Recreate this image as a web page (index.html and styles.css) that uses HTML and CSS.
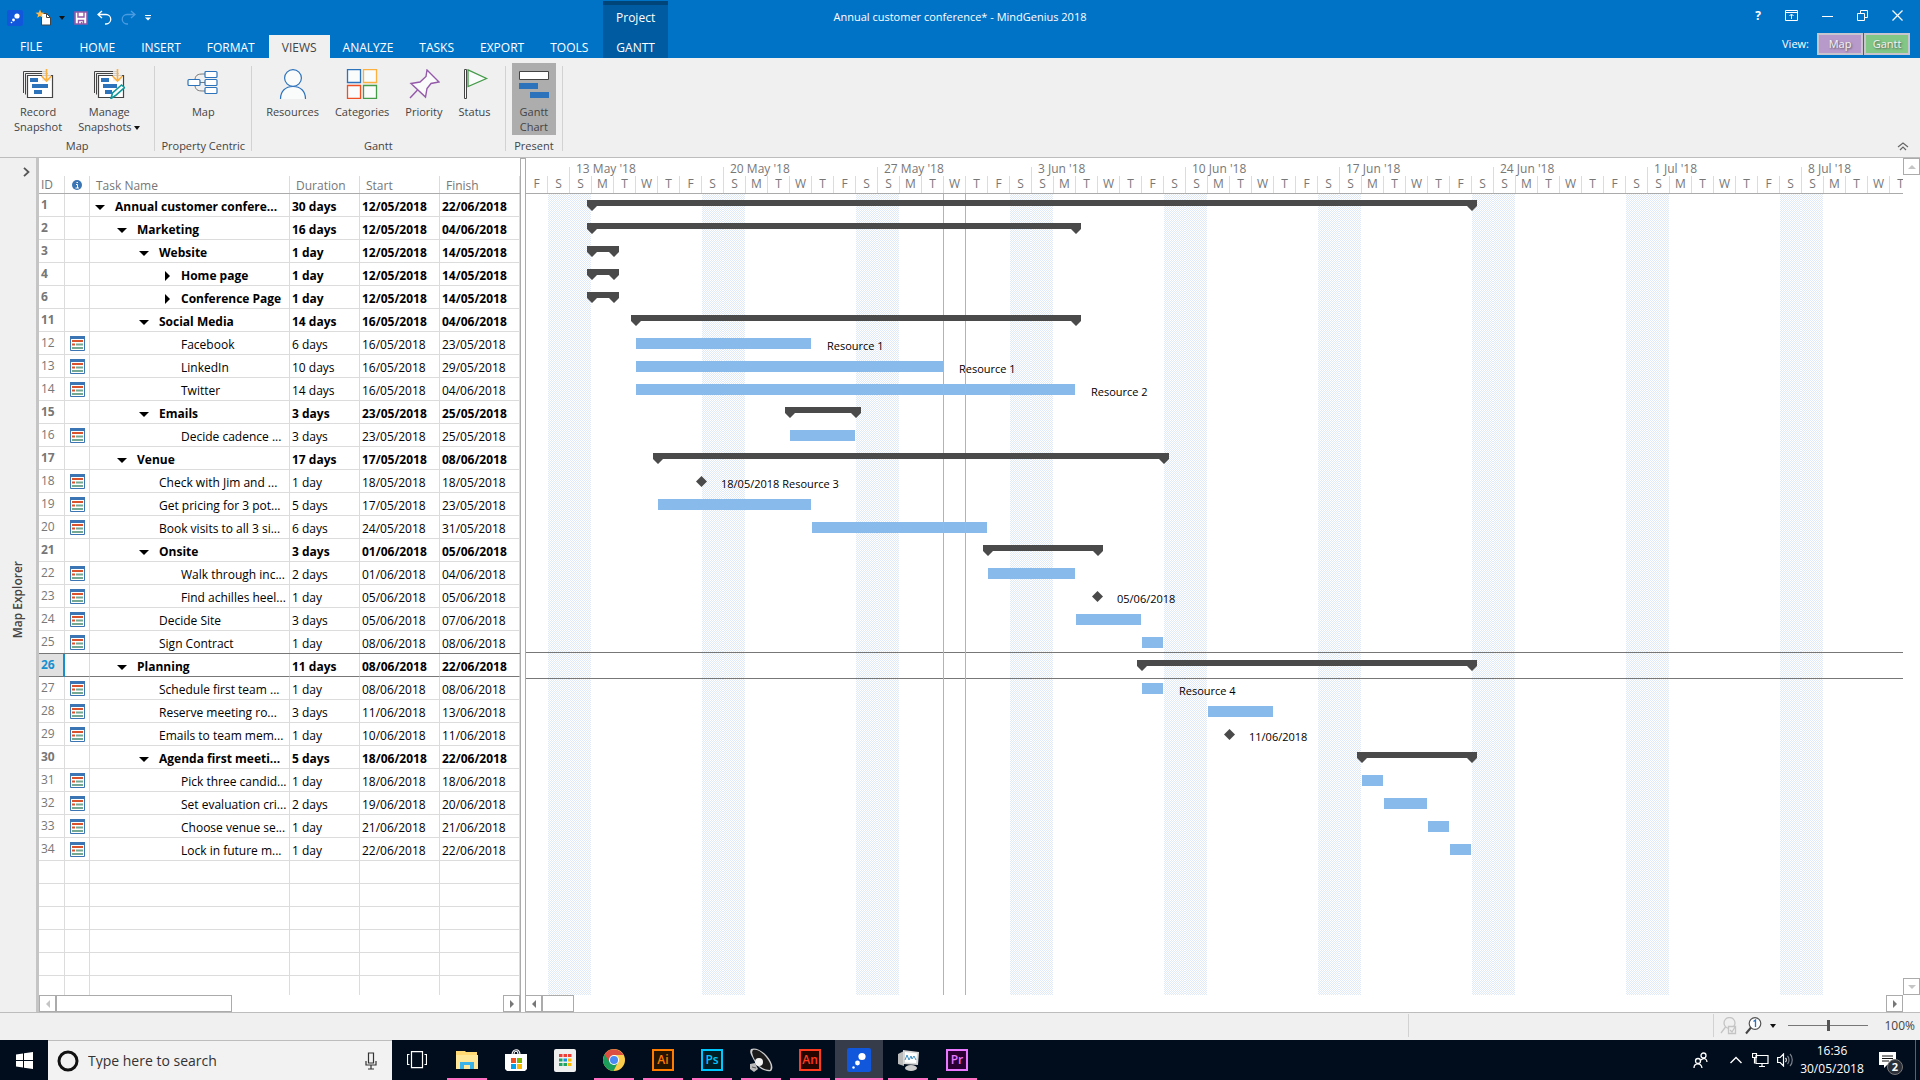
FILE: index.html
```
<!DOCTYPE html>
<html lang="en">
<head>
  <meta charset="UTF-8" />
  <meta name="viewport" content="width=device-width, initial-scale=1.0" />
  <title>Annual customer conference* - MindGenius 2018</title>
  <link rel="stylesheet" href="styles.css">
</head>
<body>
  <header class="titlebar">
    <div class="title-left">
      <div class="title-stack">
        <div class="quick">
          <svg class="app-logo" width="16" height="16" viewBox="0 0 16 16"><rect width="16" height="16" rx="2" fill="#1157dc"/><circle cx="10" cy="6" r="2.6" fill="#fff"/><circle cx="6.5" cy="10" r="1.4" fill="#fff"/><circle cx="4.5" cy="12.5" r=".8" fill="#fff"/></svg>
          <button aria-label="New"><svg width="17" height="17" viewBox="0 0 17 17"><path d="M6.5 4.500h5l4 4v7.500h-9z" fill="#fff" stroke="#444"/><path d="M11.500 4.500v4h4" fill="none" stroke="#444"/><path d="M5 .5l1.200 3 3.300.2-2.600 2 .9 3.100L5 7 2.200 8.800l.9-3.100-2.600-2 3.300-.2z" fill="#fdb94a"/></svg></button>
          <i class="caret"></i>
          <button aria-label="Save"><svg width="14" height="14" viewBox="0 0 14 14"><path d="M1 1h12v12H1z" fill="#fff" stroke="#9459a8" stroke-width="1.600"/><path d="M4 1v5h6V1M4.500 13V9.500h5V13M7.500 11v2" fill="none" stroke="#9459a8" stroke-width="1.400"/></svg></button>
          <button aria-label="Undo"><svg width="15" height="15" viewBox="0 0 15 15"><path d="M5 1L1 4.500 5 8M1 4.500h8a4.500 4.500 0 0 1 0 9.500H8" fill="none" stroke="#fff" stroke-width="1.300"/></svg></button>
          <button aria-label="Redo"><svg width="15" height="15" viewBox="0 0 15 15"><path d="M10 1l4 3.500L10 8M14 4.500H6A4.500 4.500 0 0 0 6 14h1" fill="none" stroke="#4a9be0" stroke-width="1.300"/></svg></button>
          <svg width="6" height="6" viewBox="0 0 6 6"><path d="M0 .5h6" stroke="#fff"/><path d="M0 2.500h6l-3 3z" fill="#fff"/></svg>
        </div>
        <nav class="tabs">
          <button class="tab file">FILE</button>
          <button class="tab">HOME</button>
          <button class="tab">INSERT</button>
          <button class="tab">FORMAT</button>
          <button class="tab active">VIEWS</button>
          <button class="tab">ANALYZE</button>
          <button class="tab">TASKS</button>
          <button class="tab">EXPORT</button>
          <button class="tab">TOOLS</button>
        </nav>
      </div>
      <div class="context-tab">
        <span>Project</span>
        <button class="tab">GANTT</button>
      </div>
    </div>
    <h1>Annual customer conference* - MindGenius 2018</h1>
    <div class="title-right">
      <div class="window-buttons">
        <button class="help" aria-label="Help">?</button>
        <button aria-label="Ribbon display options"><svg width="13" height="11" viewBox="0 0 13 11"><path d="M.5.500h12v10H.5zM.5 2.500h12M6.500 9V4.500M4.500 6l2-2 2 2" fill="none" stroke="#fff"/></svg></button>
        <button aria-label="Minimize"><svg width="11" height="11" viewBox="0 0 11 11"><path d="M0 6.500h11" stroke="#fff"/></svg></button>
        <button aria-label="Restore"><svg width="11" height="11" viewBox="0 0 11 11"><path d="M.5 3.500h7v7h-7zM3.500 3V.5h7v7H8" fill="none" stroke="#fff"/></svg></button>
        <button aria-label="Close"><svg width="11" height="11" viewBox="0 0 11 11"><path d="M.5.500l10 10M10.500.500l-10 10" stroke="#fff" stroke-width="1.200"/></svg></button>
      </div>
      <div class="view-switch">
        <span>View:</span>
        <button class="view-map">Map</button>
        <button class="view-gantt">Gantt</button>
      </div>
    </div>
  </header>

  <section class="ribbon">
    <div class="group">
      <div class="group-buttons">
        <button class="big">
          <svg width="32" height="30" viewBox="0 0 32 30"><path d="M1.500 24V2.500H24M3.500 25.500v-21H26M5.500 27V6.500H28" fill="none" stroke="#444"/><path d="M5.500 6.500h25v22h-25z" fill="#fff" stroke="#444" stroke-width="1.200"/><path d="M8 9h8v4H8zM10 15h16v4H10zM12 21h8v4h-8z" fill="#2d73bc"/><path d="M20 0h9v12h-9z" fill="#efefef" opacity=".8"/><path d="M24.500 0v11M19.500 7l5 5 5-5" fill="none" stroke="#fbb040" stroke-width="1.600"/></svg>
          <span>Record</span><span>Snapshot</span>
        </button>
        <button class="big">
          <svg width="32" height="30" viewBox="0 0 32 30"><path d="M1.500 24V2.500H24M3.500 25.500v-21H26" fill="none" stroke="#444"/><path d="M5.500 6.500h25v22h-25z" fill="#fff" stroke="#444" stroke-width="1.200"/><path d="M8 9h8v4H8zM10 15h14v4H10zM12 21h7v4h-7z" fill="#2d73bc"/><path d="M20 0h9v12h-9z" fill="#efefef" opacity=".8"/><path d="M24.500 0v11M19.500 7l5 5 5-5" fill="none" stroke="#fbb040" stroke-width="1.600"/><path d="M18 29.500l1.500-5.500 9-8 3 2.500-9 8z" fill="#fff" stroke="#12989a" stroke-width="1.600"/></svg>
          <span>Manage</span><span>Snapshots <i class="caret"></i></span>
        </button>
      </div>
      <div class="group-name">Map</div>
    </div>
    <div class="group">
      <div class="group-buttons">
        <button class="big">
          <svg width="32" height="30" viewBox="0 0 32 30"><path d="M12 13.500h6M8 10c1-5 4-5 10-5M8 17c1 5 4 5 10 5" fill="none" stroke="#777"/><g fill="#fff" stroke="#2d73bc" stroke-width="1.200"><rect x="1" y="10.500" width="12" height="6" rx="1"/><rect x="18" y="2.500" width="12" height="6" rx="1"/><rect x="18" y="10.500" width="12" height="6" rx="1"/><rect x="18" y="18.500" width="12" height="6" rx="1"/></g></svg>
          <span>Map</span>
        </button>
      </div>
      <div class="group-name">Property Centric</div>
    </div>
    <div class="group">
      <div class="group-buttons">
        <button class="big">
          <svg width="32" height="30" viewBox="0 0 32 30"><g fill="#fafcfc" stroke="#2d73bc" stroke-width="1.200"><circle cx="16" cy="9" r="8.400"/><path d="M3.500 30c0-8 5-12.500 12.500-12.500S28.500 22 28.500 30"/></g></svg>
          <span>Resources</span>
        </button>
        <button class="big">
          <svg width="32" height="30" viewBox="0 0 32 30"><g fill="#fafcfc" stroke-width="1.300"><path d="M1.500.500h13v13h-13z" stroke="#2d73bc"/><path d="M17.500.500h13v13h-13z" stroke="#fbb040"/><path d="M1.500 16.500h13v13h-13z" stroke="#f04e23"/><path d="M17.500 16.500h13v13h-13z" stroke="#449b48"/></g></svg>
          <span>Categories</span>
        </button>
        <button class="big">
          <svg width="32" height="30" viewBox="0 0 32 30"><path d="M19 1l12 12-8 1.500-4 5-1.500 8.500L3 14.500l9-1.500 6-5.500z" fill="#fafcfc" stroke="#9459a8" stroke-width="1.400"/><path d="M9.500 21L2 29" stroke="#9459a8" stroke-width="1.400"/></svg>
          <span>Priority</span>
        </button>
        <button class="big">
          <svg width="32" height="30" viewBox="0 0 32 30"><path d="M5.500.500h2v29h-2z" fill="#fafcfc" stroke="#444"/><path d="M9 .8l18.500 8.700L9 17.500z" fill="#fafcfc" stroke="#449b48" stroke-width="1.300"/></svg>
          <span>Status</span>
        </button>
      </div>
      <div class="group-name">Gantt</div>
    </div>
    <div class="group">
      <div class="group-buttons">
        <button class="big pressed">
          <svg width="32" height="30" viewBox="0 0 32 30"><path d="M1.500 2.500h29v8h-29z" fill="#fff" stroke="#444"/><path d="M1 14h19v6H1zM12 23h19v6H12z" fill="#2d73bc"/></svg>
          <span>Gantt</span><span>Chart</span>
        </button>
      </div>
      <div class="group-name">Present</div>
    </div>
    <button class="collapse" aria-label="Collapse ribbon"><svg width="12" height="9" viewBox="0 0 12 9"><path d="M1 5l5-4 5 4M3 8l3-3 3 3" fill="none" stroke="#666" stroke-width="1.200"/></svg></button>
  </section>

  <main class="workspace">
    <aside class="explorer">
      <button class="explorer-open" aria-label="Expand"><svg width="7" height="10" viewBox="0 0 7 10"><path d="M1 .8L5.500 5 1 9.200" fill="none" stroke="#555" stroke-width="1.800"/></svg></button>
      <button class="explorer-name">Map Explorer</button>
    </aside>

    <section class="tasks">
      <div class="tasks-scroll">
        <table>
          <colgroup><col class="c-id"><col class="c-info"><col class="c-name"><col class="c-dur"><col class="c-date"><col class="c-date"></colgroup>
          <thead>
            <tr>
              <th><span>ID</span></th>
              <th class="info"><svg width="10" height="10" viewBox="0 0 10 10"><circle cx="5" cy="5" r="5" fill="#3b75b3"/><path d="M4 4.500h1.500V8M3.500 8h3.500M4.500 2.500h1.500" stroke="#fff" fill="none"/></svg></th>
              <th class="wide"><span>Task Name</span></th>
              <th class="wide"><span>Duration</span></th>
              <th class="wide"><span>Start</span></th>
              <th class="wide"><span>Finish</span></th>
            </tr>
          </thead>
          <tbody id="taskRows"></tbody>
        </table>
      </div>
      <div class="hscroll">
        <button class="arrow left off" aria-label="Scroll left"></button>
        <div class="thumb thumb-tasks"></div>
        <button class="arrow right" aria-label="Scroll right"></button>
      </div>
    </section>

    <div class="splitter"></div>

    <section class="chart">
      <div class="chart-row">
        <div class="chart-view">
          <div class="weeks" id="weeks"></div>
          <div class="days" id="days"></div>
          <div class="chart-body">
            <div class="layer" id="columns"></div>
            <div class="layer bars" id="bars"></div>
            <div class="layer" id="today"></div>
          </div>
        </div>
        <div class="vscroll">
          <button class="arrow up off" aria-label="Scroll up"></button>
          <button class="arrow down off" aria-label="Scroll down"></button>
        </div>
      </div>
      <div class="hscroll chart-hscroll">
        <button class="arrow left" aria-label="Scroll left"></button>
        <div class="thumb thumb-chart"></div>
        <button class="arrow right" aria-label="Scroll right"></button>
      </div>
    </section>
  </main>

  <footer class="status">
    <div class="status-cell"></div>
    <div class="status-zoom">
      <svg width="17" height="18" viewBox="0 0 17 18"><g fill="none" stroke="#c4c4c4" stroke-width="1.300"><circle cx="9.500" cy="6" r="5.500"/><path d="M5.500 10L1 16"/><path d="M8.500 9.500h7v7h-7z" fill="#f0f0f0"/><path d="M10 13l2 2 3-5"/></g></svg>
      <svg width="17" height="18" viewBox="0 0 17 18"><circle cx="10" cy="6.500" r="5.800" fill="#fff" stroke="#555" stroke-width="1.200"/><path d="M6 10.500L1 16.500" stroke="#444" stroke-width="2"/><path d="M8.500 4.500L10.500 3v7" fill="none" stroke="#2d73bc" stroke-width="1.300"/></svg>
      <i class="caret"></i>
      <input type="range" min="0" max="200" value="100" aria-label="Zoom">
      <span>100%</span>
    </div>
  </footer>

  <div class="taskbar">
    <button class="start" aria-label="Start"><svg width="17" height="17" viewBox="0 0 17 17"><path d="M0 2.500L7 1.500V8H0zM8 1.300L17 0v8H8zM0 9h7v6.500l-7-1zM8 9h9v8l-9-1.300z" fill="#fff"/></svg></button>
    <label class="search">
      <svg width="22" height="22" viewBox="0 0 22 22"><circle cx="11" cy="11" r="9" fill="none" stroke="#111" stroke-width="3"/></svg>
      <input type="text" placeholder="Type here to search" aria-label="Type here to search">
      <svg width="12" height="18" viewBox="0 0 12 18"><path d="M3.500 1h5v10h-5zM1 9v4h10V9M6 13v4M3 17h6" fill="none" stroke="#333" stroke-width="1.200"/></svg>
    </label>
    <div class="apps">
      <button class="task-view" aria-label="Task view"><svg width="20" height="18" viewBox="0 0 20 18"><path d="M4.500.600h11v16h-11zM2.500 3.500h-2v10h2M17.500 3.500h2v10h-2" fill="none" stroke="#fff" stroke-width="1.200"/></svg></button>
      <button class="open" aria-label="File Explorer"><svg width="22" height="20" viewBox="0 0 22 20"><path d="M0 1h9l1 1h11v17H0z" fill="#ffd974"/><path d="M0 5h22v14H0z" fill="#ffe79a"/><path d="M4 19v-7h14v7h-4v-4H8v4z" fill="#3ab4e8"/></svg></button>
      <button aria-label="Store"><svg width="24" height="24" viewBox="0 0 24 24"><path d="M8 7c0-7 8-7 8 0M10 7c0-5 4-5 4 0" fill="none" stroke="#fff" stroke-width="1.200"/><path d="M1 6h22v15l-2 2H3l-2-2z" fill="#fff"/><path d="M7 10h5v5H7z" fill="#f04e23"/><path d="M13 10h5v5h-5z" fill="#7db700"/><path d="M7 16h5v5H7z" fill="#00a3ee"/><path d="M13 16h5v5h-5z" fill="#fdb900"/></svg></button>
      <button aria-label="Apps"><svg width="22" height="23" viewBox="0 0 22 23"><rect width="22" height="23" rx="2" fill="#efefef"/><path d="M5 5h3.500v3H5zM9.500 5H13v3H9.500zM14 5h3.500v3H14z" fill="#ef3e36"/><path d="M5 9.500h3.500v3H5z" fill="#1fa463"/><path d="M9.500 9.500H13v3H9.500z" fill="#1a8fe8"/><path d="M14 9.500h3.500v3H14z" fill="#fdb900"/><path d="M5 14h3.500v3H5zM9.500 14H13v3H9.500z" fill="#1fa463"/><path d="M14 14h3.500v3H14z" fill="#fdb900"/></svg></button>
      <button class="open" aria-label="Chrome"><svg width="22" height="22" viewBox="0 0 22 22"><circle cx="11" cy="11" r="11" fill="#fbcd4a"/><path d="M1.500 5.500A11 11 0 0 0 10.500 22l4.500-9-4-2-4-5z" fill="#1b9e5a"/><path d="M1.500 5.500A11 11 0 0 1 20.500 6H11L6 12z" fill="#dc4e41"/><circle cx="11" cy="11" r="5" fill="#fff"/><circle cx="11" cy="11" r="4" fill="#4a8af4"/></svg></button>
      <button class="open"><span class="adobe ai">Ai</span></button>
      <button class="open"><span class="adobe ps">Ps</span></button>
      <button class="open" aria-label="Audio"><svg width="24" height="24" viewBox="0 0 24 24"><path d="M2 1c4-2 11 1 16 7s7 12 4 15c-6 1-12-2-16-9S0 4 2 1z" fill="#ccc"/><path d="M4 2c4-1 9 2 13 7s6 9 4 13c-5 0-11-3-14-8S2 4 4 2z" fill="#1b1b1b"/><circle cx="10" cy="14" r="4" fill="#f2f2f2"/><path d="M1 16l5-1 3 6-4 3-4-3z" fill="#bbb"/><path d="M3 19l4 1" stroke="#555"/></svg></button>
      <button class="open"><span class="adobe an">An</span></button>
      <button class="open current" aria-label="MindGenius"><svg width="24" height="24" viewBox="0 0 24 24"><rect width="24" height="24" rx="2" fill="#1157dc"/><circle cx="15" cy="8.500" r="3.600" fill="#fff"/><circle cx="10.500" cy="15" r="2.400" fill="#fff"/><circle cx="6.500" cy="19.500" r="1.200" fill="#fff"/></svg></button>
      <button class="open" aria-label="Monitor"><svg width="23" height="22" viewBox="0 0 23 22"><path d="M1 5l6-3v15l-6-2z" fill="#bbb"/><path d="M6 1l16 2-1 13-15-1z" fill="#d8d8d8"/><path d="M8 3l12 1.500-1 9.500-11-.5z" fill="#fff"/><path d="M8 11l2-5 2 5 2-4 1 3 2-3 2 4" fill="none" stroke="#3a8fc4"/><ellipse cx="14" cy="19" rx="6" ry="3" fill="#ccc"/></svg></button>
      <button class="open"><span class="adobe pr">Pr</span></button>
    </div>
    <div class="tray">
      <svg width="15" height="17" viewBox="0 0 15 17"><g fill="none" stroke="#fff" stroke-width="1.300"><circle cx="10.500" cy="3.500" r="2.500"/><circle cx="5" cy="9" r="2.500"/><path d="M8 8c3-3 6-1 6 2M1 16c0-5 7-6 8 0"/></g></svg>
      <svg class="tray-up" width="12" height="8" viewBox="0 0 12 8"><path d="M.5 7L6 1.500 11.500 7" fill="none" stroke="#fff" stroke-width="1.400"/></svg>
      <svg width="17" height="15" viewBox="0 0 17 15"><path d="M4 2.500h12v8H4zM7 13.500h6M10 10.500v3M.5.500h4v4h-4zM2.500 4.500v6" fill="none" stroke="#fff" stroke-width="1.200"/></svg>
      <svg width="16" height="14" viewBox="0 0 16 14"><path d="M.6 4.500h2.600L6.500 1v12L3.200 9.500H.6zM8.500 5c1 1 1 3 0 4" fill="none" stroke="#fff" stroke-width="1.200"/><path d="M10.500 3c2 2 2 6 0 8M13 1c3 3 3 9 0 12" fill="none" stroke="#7b828c" stroke-width="1.200"/></svg>
      <div class="clock"><span>16:36</span><span>30/05/2018</span></div>
      <button class="action" aria-label="Notifications"><svg width="17" height="16" viewBox="0 0 17 16"><path d="M0 0h17v13H8l-3 3v-3H0z" fill="#fff"/><path d="M3 4h11M3 6.500h11M3 9h7" stroke="#111"/></svg><b>2</b></button>
    </div>
  </div>
  <script src="script.js"></script>
</body>
</html>
```
FILE: styles.css
```
* {
  box-sizing: border-box;
}

body {
  margin: 0;
  height: 100vh;
  display: flex;
  flex-direction: column;
  overflow: hidden;
  font-family: 'Open Sans', 'Noto Sans', sans-serif;
  font-size: 12px;
  line-height: 16px;
  color: #444;
  background: #f0f0f0;
}

button {
  font: inherit;
  color: inherit;
  background: none;
  border: none;
  padding: 0;
  cursor: pointer;
}

svg {
  display: block;
  flex: none;
}

.caret {
  display: inline-block;
  border: 3px solid transparent;
  border-top: 4px solid #111;
  border-bottom: none;
  vertical-align: middle;
}

/* title bar */
.titlebar {
  display: grid;
  grid-template-columns: 1fr auto 1fr;
  height: 58px;
  flex: none;
  background: #0173c7;
  color: #fff;
}

.titlebar h1 {
  margin: 0;
  padding-top: 9px;
  font-size: 11px;
  font-weight: normal;
}

.title-left {
  display: flex;
}

.title-stack {
  display: flex;
  flex-direction: column;
  justify-content: space-between;
}

.quick {
  display: flex;
  align-items: center;
  gap: 9px;
  height: 35px;
  padding-left: 7px;
}

.quick .caret {
  margin-left: -2px;
}

.app-logo {
  margin-right: 3px;
}

.tabs {
  display: flex;
}

.tab {
  height: 23px;
  padding: 2px 13px 0;
}

.tab.file {
  padding: 0 24px 0 20px;
}

.tab.active {
  margin-left: 1px;
  background: #f0f0f0;
  color: #444;
}

.context-tab {
  display: flex;
  flex-direction: column;
  justify-content: space-between;
  align-items: center;
  margin: 1px 0 0 2px;
  padding-top: 5px;
  border-top: 4px solid #00457a;
  background: #005ba1;
}

.title-right {
  display: flex;
  flex-direction: column;
  align-items: flex-end;
  padding: 10px 10px 0 0;
}

.window-buttons {
  display: flex;
  gap: 24px;
  height: 23px;
  padding-right: 7px;
  align-items: flex-start;
}

.help {
  font-weight: bold;
  line-height: 12px;
}

.view-switch {
  display: flex;
  align-items: center;
  gap: 1px;
}

.view-switch span {
  font-size: 11px;
  padding-right: 7px;
}

.view-switch button {
  width: 46px;
  height: 22px;
  border: 2px solid #c9c5cf;
  font-size: 11px;
  color: #f4f4f4;
  text-shadow: 1px 1px 2px #555;
}

.view-switch .view-map {
  background: #b79aca;
}

.view-switch .view-gantt {
  background: #82c785;
}

/* ribbon */
.ribbon {
  display: flex;
  flex: none;
  height: 100px;
  padding: 5px 0 3px;
  border-bottom: 1px solid #bdbdbd;
  font-size: 11px;
}

.group {
  display: flex;
  flex-direction: column;
  justify-content: space-between;
  padding: 0 7px 0 6px;
  background: linear-gradient(#d2d2d2, #d2d2d2) 100% 3px / 1px 85px no-repeat;
}

.group-buttons {
  display: flex;
  justify-content: center;
}

.group-name {
  text-align: center;
}

.big {
  display: flex;
  flex-direction: column;
  align-items: center;
  height: 72px;
  padding: 6px 8px 0;
  line-height: 15px;
}

.big svg {
  margin: 0 -8px 5px;
}

.big.pressed {
  background: #adadad;
}

.collapse {
  margin: auto 11px 3px auto;
}

/* workspace */
.workspace {
  display: flex;
  flex: 1;
  min-height: 0;
  background: #fff;
}

.explorer {
  display: flex;
  flex-direction: column;
  align-items: center;
  justify-content: center;
  position: relative;
  width: 39px;
  flex: none;
  padding-top: 30px;
  background: #f0f0f0;
  border-right: 3px solid #c5c5c5;
}

.explorer-open {
  position: absolute;
  top: 9px;
  right: 6px;
}

.explorer-name {
  writing-mode: vertical-rl;
  transform: rotate(180deg);
  font-weight: 600;
}

.tasks {
  display: flex;
  flex-direction: column;
  width: 481px;
  flex: none;
}

.tasks-scroll {
  flex: 1;
  min-height: 0;
  overflow: hidden;
}

table {
  width: 100%;
  table-layout: fixed;
  border-collapse: separate;
  border-spacing: 0;
}

.c-id { width: 26px; }
.c-info { width: 25px; }
.c-dur { width: 70px; }
.c-date { width: 80px; }

th {
  height: 36px;
  padding: 18px 2px 0;
  text-align: left;
  vertical-align: middle;
  font-weight: normal;
  color: #777;
  border-bottom: 1px solid #ababab;
  background: linear-gradient(#dcdcdc, #dcdcdc) 100% 100% / 1px 17px no-repeat;
}

th.wide {
  padding: 21px 0 0 6px;
  line-height: 14px;
}

th.info {
  padding-right: 4px;
}

th svg {
  margin: auto;
}

td {
  height: 23px;
  padding: 4px 0 0 2px;
  border-right: 1px solid #dcdcdc;
  border-bottom: 1px solid #dcdcdc;
  color: #000;
  white-space: nowrap;
  line-height: 18px;
}

td.id {
  padding: 0 0 0 2px;
  color: #777;
}

td.icon {
  padding: 1px 0 0 5px;
}

.name {
  display: flex;
  align-items: center;
  padding-left: calc(var(--level) * 22px - 19px);
}

.twist {
  width: 20px;
  flex: none;
}

.twist::before {
  content: '';
  display: block;
  width: 0;
  border: 5px solid transparent;
  border-top-color: #000;
  border-bottom: none;
}

.twist.closed::before {
  margin-left: 4px;
  border: 5px solid transparent;
  border-left-color: #000;
  border-right: none;
}

.twist.none::before {
  display: none;
}

tr.summary td {
  font-weight: bold;
}

tr.selected td {
  border-bottom-color: #777;
  box-shadow: 0 -1px #777;
}

tr.selected td.id {
  color: #1590cf;
  background: #e1e1e1;
  border-right: 2px solid #1590cf;
}

.splitter {
  width: 6px;
  flex: none;
  border: 1px solid #ababab;
  border-bottom: none;
}

/* scroll bars */
.hscroll {
  display: flex;
  flex: none;
  height: 17px;
}

.arrow {
  display: flex;
  align-items: center;
  justify-content: center;
  width: 17px;
  height: 17px;
  border: 1px solid #ababab;
  background: #fff;
}

.arrow::before {
  content: '';
  border: 4px solid transparent;
}

.arrow.left::before { border-right-color: #777; border-left: none; }
.arrow.right::before { border-left-color: #777; border-right: none; }
.arrow.up::before { border-bottom-color: #c5c5c5; border-top: none; }
.arrow.down::before { border-top-color: #c5c5c5; border-bottom: none; }
.arrow.left.off::before { border-right-color: #c5c5c5; }

.hscroll .right {
  margin-left: auto;
}

.thumb {
  border: 1px solid #ababab;
}

.thumb-tasks { width: 176px; }
.thumb-chart { width: 32px; }

.chart-hscroll {
  margin: 0 17px 0 -1px;
}

.vscroll {
  display: flex;
  flex-direction: column;
  justify-content: space-between;
  width: 17px;
  flex: none;
}

/* gantt chart */
.chart {
  display: flex;
  flex-direction: column;
  flex: 1;
  min-width: 0;
}

.chart-row {
  display: flex;
  flex: 1;
  min-height: 0;
}

.chart-view {
  display: flex;
  flex-direction: column;
  flex: 1;
  min-width: 0;
  overflow: hidden;
}

.weeks {
  display: flex;
  height: 18px;
  padding-left: 43px;
  flex: none;
}

.week {
  width: 154px;
  flex: none;
  padding: 3px 0 0 7px;
  color: #777;
  background: linear-gradient(#dcdcdc, #dcdcdc) 0 100% / 1px 9px no-repeat;
}

.days {
  display: flex;
  flex: none;
  height: 18px;
  border-bottom: 1px solid #ababab;
  color: #777;
}

.day,
.column {
  width: 22px;
  flex: none;
  border-left: 1px solid transparent;
}

.day {
  border-left-color: #dcdcdc;
  text-align: center;
}

.day:first-child,
.column:first-child {
  width: 21px;
  border-left: none;
}

.chart-body {
  display: grid;
  flex: 1;
  min-height: 0;
}

.layer {
  grid-area: 1 / 1;
  display: flex;
  min-width: 0;
  min-height: 0;
}

.column.weekend {
  border-left: none;
  background: repeating-conic-gradient(#dfe9f7 0 25%, #fff 0 50%) 0 0 / 2px 2px;
}

.column.saturday {
  width: 21px;
  margin-left: 1px;
}

.column.today {
  border-left: none;
  background: linear-gradient(90deg, #eba566 1px, transparent 1px);
}

.bars {
  flex-direction: column;
  padding-left: 21px;
}

.line {
  display: flex;
  flex: none;
  height: 23px;
  padding-top: 6px;
  font-size: 11px;
  color: #000;
}

.line.selected {
  height: 27px;
  margin: -2px 0 -2px -21px;
  padding: 7px 0 0 21px;
  border-top: 1px solid #777;
  border-bottom: 1px solid #777;
}

.bar {
  height: 11px;
  margin-left: calc(var(--start) * 22px + 1px);
  width: calc(var(--days) * 22px - 1px);
  background: #89baec;
}

.bracket {
  height: 11px;
  margin-left: calc(var(--start) * 22px - 4px);
  width: calc(var(--days) * 22px + 10px);
  background: #4a4a4a;
  clip-path: polygon(0 0, 100% 0, 100% 6px, calc(100% - 5px) 11px, calc(100% - 10px) 6px, 10px 6px, 5px 11px, 0 6px);
}

.milestone {
  width: 11px;
  height: 11px;
  margin-left: calc(var(--start) * 22px - 5px);
  background: #4a4a4a;
  clip-path: polygon(50% 0, 100% 50%, 50% 100%, 0 50%);
}

.label {
  padding-left: 16px;
  white-space: nowrap;
}

.milestone + .label {
  padding-left: 14px;
}

/* status bar */
.status {
  display: flex;
  justify-content: flex-end;
  flex: none;
  height: 28px;
  padding: 1px 0 3px;
  border-top: 1px solid #bdbdbd;
}

.status-cell {
  width: 305px;
  border-left: 1px solid #d2d2d2;
}

.status-zoom {
  display: flex;
  align-items: center;
  gap: 8px;
  width: 207px;
  padding: 0 5px 0 6px;
  border-left: 1px solid #d2d2d2;
}

.status-zoom span {
  margin-left: auto;
}

input[type="range"] {
  -webkit-appearance: none;
  appearance: none;
  width: 80px;
  height: 11px;
  margin: 0 0 0 4px;
  background: linear-gradient(#777, #777) 0 5px / 100% 1px no-repeat;
}

input[type="range"]::-webkit-slider-thumb {
  -webkit-appearance: none;
  width: 3px;
  height: 11px;
  background: #555;
}

/* windows taskbar */
.taskbar {
  display: flex;
  flex: none;
  height: 40px;
  background: #010c1c;
  color: #fff;
}

.start {
  width: 48px;
  padding-left: 16px;
}

.search {
  display: flex;
  align-items: center;
  width: 344px;
  padding: 0 15px 0 9px;
  background: #f2f2f2;
  border-top: 1px solid #bdbdbd;
}

.search input {
  flex: 1;
  min-width: 0;
  border: none;
  outline: none;
  padding: 0 0 0 9px;
  background: none;
  font: inherit;
  font-size: 14px;
}

.search input::placeholder {
  color: #333;
}

.apps {
  display: flex;
  gap: 1px;
}

.apps button {
  display: flex;
  align-items: center;
  justify-content: center;
  width: 48px;
  height: 40px;
}

.apps .task-view {
  width: 50px;
}

.apps .open {
  background: linear-gradient(#ff6ec0, #ff6ec0) 4px 100% / 40px 2px no-repeat;
}

.apps .current {
  background: linear-gradient(#ff6ec0, #ff6ec0) 0 100% / 100% 2px no-repeat, #363c4a;
}

.adobe {
  width: 22px;
  height: 22px;
  border: 2px solid;
  font-size: 12px;
  font-weight: 600;
  line-height: 18px;
}

.ai { color: #ff7c00; background: #261300; }
.ps { color: #00c8ff; background: #001e26; }
.an { color: #ff3b1f; background: #260400; }
.pr { color: #ea77ff; background: #2a0033; }

.tray {
  display: flex;
  align-items: center;
  gap: 8px;
  margin: 0 4px 0 auto;
  padding-right: 8px;
  border-right: 1px solid #5b616b;
}

.tray-up {
  margin: 0 2px 0 14px;
}

.clock {
  display: flex;
  flex-direction: column;
  align-items: center;
  width: 66px;
  margin-left: -2px;
  line-height: 18px;
}

.action {
  position: relative;
  margin-left: 6px;
  width: 28px;
}

.action b {
  position: absolute;
  left: 8px;
  top: 7px;
  width: 16px;
  height: 16px;
  border: 1px solid #777;
  border-radius: 8px;
  background: #2b2f38;
  font-size: 11px;
  line-height: 14px;
}
```
FILE: script.js
```
// id, level, name, duration, start, finish, kind, first day, last day, label
// days are counted from Saturday 12 May
const tasks = [
  [1, 1, 'Annual customer confere...', '30 days', '12/05/2018', '22/06/2018', 'open', 2, 42],
  [2, 2, 'Marketing', '16 days', '12/05/2018', '04/06/2018', 'open', 2, 24],
  [3, 3, 'Website', '1 day', '12/05/2018', '14/05/2018', 'open', 2, 3],
  [4, 4, 'Home page', '1 day', '12/05/2018', '14/05/2018', 'closed', 2, 3],
  [6, 4, 'Conference Page', '1 day', '12/05/2018', '14/05/2018', 'closed', 2, 3],
  [11, 3, 'Social Media', '14 days', '16/05/2018', '04/06/2018', 'open', 4, 24],
  [12, 4, 'Facebook', '6 days', '16/05/2018', '23/05/2018', 'task', 4, 12, 'Resource 1'],
  [13, 4, 'LinkedIn', '10 days', '16/05/2018', '29/05/2018', 'task', 4, 18, 'Resource 1'],
  [14, 4, 'Twitter', '14 days', '16/05/2018', '04/06/2018', 'task', 4, 24, 'Resource 2'],
  [15, 3, 'Emails', '3 days', '23/05/2018', '25/05/2018', 'open', 11, 14],
  [16, 4, 'Decide cadence ...', '3 days', '23/05/2018', '25/05/2018', 'task', 11, 14],
  [17, 2, 'Venue', '17 days', '17/05/2018', '08/06/2018', 'open', 5, 28],
  [18, 3, 'Check with Jim and ...', '1 day', '18/05/2018', '18/05/2018', 'milestone', 7, 7, '18/05/2018 Resource 3'],
  [19, 3, 'Get pricing for 3 pot...', '5 days', '17/05/2018', '23/05/2018', 'task', 5, 12],
  [20, 3, 'Book visits to all 3 si...', '6 days', '24/05/2018', '31/05/2018', 'task', 12, 20],
  [21, 3, 'Onsite', '3 days', '01/06/2018', '05/06/2018', 'open', 20, 25],
  [22, 4, 'Walk through inc...', '2 days', '01/06/2018', '04/06/2018', 'task', 20, 24],
  [23, 4, 'Find achilles heel...', '1 day', '05/06/2018', '05/06/2018', 'milestone', 25, 25, '05/06/2018'],
  [24, 3, 'Decide Site', '3 days', '05/06/2018', '07/06/2018', 'task', 24, 27],
  [25, 3, 'Sign Contract', '1 day', '08/06/2018', '08/06/2018', 'task', 27, 28],
  [26, 2, 'Planning', '11 days', '08/06/2018', '22/06/2018', 'open', 27, 42],
  [27, 3, 'Schedule first team ...', '1 day', '08/06/2018', '08/06/2018', 'task', 27, 28, 'Resource 4'],
  [28, 3, 'Reserve meeting ro...', '3 days', '11/06/2018', '13/06/2018', 'task', 30, 33],
  [29, 3, 'Emails to team mem...', '1 day', '10/06/2018', '11/06/2018', 'milestone', 31, 31, '11/06/2018'],
  [30, 3, 'Agenda first meeti...', '5 days', '18/06/2018', '22/06/2018', 'open', 37, 42],
  [31, 4, 'Pick three candid...', '1 day', '18/06/2018', '18/06/2018', 'task', 37, 38],
  [32, 4, 'Set evaluation cri...', '2 days', '19/06/2018', '20/06/2018', 'task', 38, 40],
  [33, 4, 'Choose venue se...', '1 day', '21/06/2018', '21/06/2018', 'task', 40, 41],
  [34, 4, 'Lock in future m...', '1 day', '22/06/2018', '22/06/2018', 'task', 41, 42]
];

const selectedId = 26;
const emptyRows = 6;
const dayCount = 63;
const todayIndex = 19;
const weekNames = ["13 May '18", "20 May '18", "27 May '18", "3 Jun '18", "10 Jun '18", "17 Jun '18", "24 Jun '18", "1 Jul '18", "8 Jul '18"];
const dayNames = 'FSSMTWT';

const taskIcon = '<svg width="15" height="15" viewBox="0 0 15 15"><path d="M.5.500h14v14H.5z" fill="#fff" stroke="#3b75b3"/><path d="M0 0h15v3H0z" fill="#3b75b3"/><path d="M2 4h11v2H2zM2 7.500h3v2H2z" fill="#d9532c"/><path d="M6 7.500h7v2H6zM2 11h11v2H2z" fill="#74a892"/></svg>';

let rows = '';
let bars = '';

tasks.forEach(([id, level, name, duration, start, finish, kind, from, to, label]) => {
  const summary = kind === 'open' || kind === 'closed';
  const selected = id === selectedId ? ' selected' : '';

  rows += `<tr class="${summary ? 'summary' : ''}${selected}">
    <td class="id">${id}</td>
    <td class="icon">${summary ? '' : taskIcon}</td>
    <td><div class="name" style="--level:${level}"><span class="twist ${summary ? kind : 'none'}"></span>${name}</div></td>
    <td>${duration}</td><td>${start}</td><td>${finish}</td>
  </tr>`;

  const shape = summary ? 'bracket' : kind === 'milestone' ? 'milestone' : 'bar';
  bars += `<div class="line${selected}"><div class="${shape}" style="--start:${from};--days:${to - from}"></div>${label ? `<span class="label">${label}</span>` : ''}</div>`;
});

for (let i = 0; i < emptyRows; i++) {
  rows += '<tr><td></td><td></td><td></td><td></td><td></td><td></td></tr>';
}

let days = '';
let columns = '';
let today = '';

for (let i = 0; i < dayCount; i++) {
  const weekday = i % 7;
  days += `<div class="day">${dayNames[weekday]}</div>`;
  columns += `<div class="column${weekday === 1 ? ' weekend saturday' : weekday === 2 ? ' weekend' : ''}"></div>`;
  today += `<div class="column${i === todayIndex || i === todayIndex + 1 ? ' today' : ''}"></div>`;
}

document.getElementById('taskRows').innerHTML = rows;
document.getElementById('bars').innerHTML = bars;
document.getElementById('weeks').innerHTML = weekNames.map(w => `<div class="week">${w}</div>`).join('');
document.getElementById('days').innerHTML = days;
document.getElementById('columns').innerHTML = columns;
document.getElementById('today').innerHTML = today;
```
